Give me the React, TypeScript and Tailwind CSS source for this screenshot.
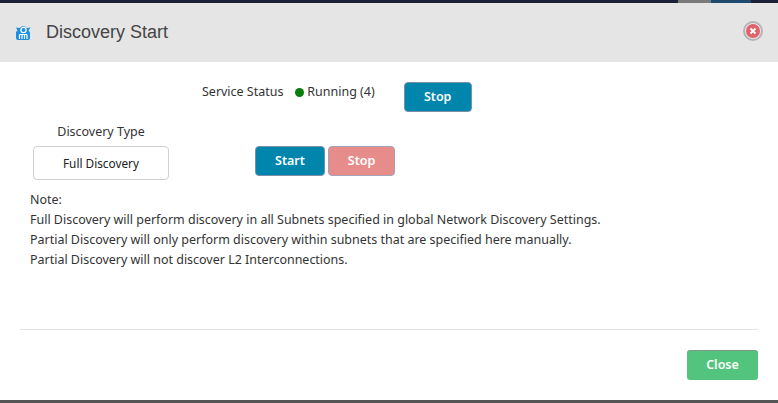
export default function App() {
  const font = { fontFamily: '"Noto Sans", sans-serif' };
  return (
    <div className="w-[778px] h-[403px] flex flex-col overflow-hidden bg-white text-[#333]" style={font}>
      <div className="h-[3px] flex shrink-0 bg-[#1a2035]">
        <div className="w-[678px] bg-[#1a2035]" />
        <div className="w-[33px] bg-[#7a7a7a]" />
        <div className="w-[40px] bg-[#1d4a6e]" />
      </div>
      <div className="h-[59px] shrink-0 bg-[#e5e5e5] flex items-center pl-[15px] pr-[15px]">
        <svg width="16" height="16" viewBox="0 0 16 16" className="mr-[15px] shrink-0">
          <path d="M1 2.5 L5 3 C6 0.5 10.5 0.5 11.5 3 L15.5 2.5 L13.5 5.5 L15 7.5 L15 13 Q15 15 13 15 L3 15 Q1 15 1 13 L1 7 L2.5 5.5 Z" fill="#1b8fe0" />
          <circle cx="8.5" cy="5" r="2.6" fill="none" stroke="#fff" strokeWidth="1.3" />
          <path d="M4.5 14 V9.5 M7 14 V9.5 M9.5 14 V9.5 M12 14 V9.5 M4.5 9.5 H12" stroke="#fff" strokeWidth="1.2" fill="none" />
        </svg>
        <span className="text-[18px] text-[#444]" style={{ fontFamily: '"Liberation Sans", sans-serif' }}>Discovery Start</span>
        <div className="ml-auto mb-[3px] w-[20px] h-[20px] rounded-full border-2 border-[#b5b5b5] bg-[#e5e5e5] flex items-center justify-center">
          <div className="w-[14px] h-[14px] rounded-full bg-[#e0636b] flex items-center justify-center">
            <svg width="8" height="8" viewBox="0 0 8 8">
              <path d="M1.5 1.5 L6.5 6.5 M6.5 1.5 L1.5 6.5" stroke="#fff" strokeWidth="1.8" />
            </svg>
          </div>
        </div>
      </div>
      <div className="flex-1 flex flex-col text-[12.47px] leading-[20px]">
        <div className="flex items-start pl-[202px] pt-[20px] h-[84px]">
          <span>Service Status</span>
          <span className="ml-[12px] mt-[6px] w-[9px] h-[9px] rounded-full bg-[#0a7d0a]" />
          <span className="ml-[3px]">Running (4)</span>
          <button className="ml-[29px] w-[68px] h-[30px] rounded-[4px] bg-[#0086ad] border border-[#7b8fa8] text-white font-semibold text-[12.5px]">Stop</button>
        </div>
        <div className="flex items-start pl-[33px]">
          <div className="w-[136px] flex flex-col items-center">
            <span className="h-[20px] mt-[-24px] mb-[4px]">Discovery Type</span>
            <div className="w-[136px] h-[34px] rounded-[4px] border border-[#d0d0d0] flex items-center justify-center text-[#222] text-[11.8px]">Full Discovery</div>
          </div>
          <button className="ml-[86px] w-[70px] h-[30px] rounded-[4px] bg-[#0086ad] border border-[#7b8fa8] text-white font-semibold text-[12.5px]">Start</button>
          <button className="ml-[3px] w-[67px] h-[30px] rounded-[4px] bg-[#e68d8b] border border-[#a3a3b8] text-white font-semibold text-[12.5px]">Stop</button>
        </div>
        <div className="pl-[30px] mt-[10px]">
          <p>Note:</p>
          <p>Full Discovery will perform discovery in all Subnets specified in global Network Discovery Settings.</p>
          <p>Partial Discovery will only perform discovery within subnets that are specified here manually.</p>
          <p>Partial Discovery will not discover L2 Interconnections.</p>
        </div>
        <div className="mx-[20px] mt-[59px] border-t border-[#e3e3e3]" />
        <div className="flex justify-end pr-[20px] pt-[20px]">
          <button className="w-[71px] h-[30px] pb-[2px] rounded-[3px] bg-[#52c47d] border-t border-[#7a9a85] text-white text-[12.5px] font-semibold">Close</button>
        </div>
      </div>
      <div className="h-[3px] shrink-0 bg-[#555]" />
    </div>
  );
}
